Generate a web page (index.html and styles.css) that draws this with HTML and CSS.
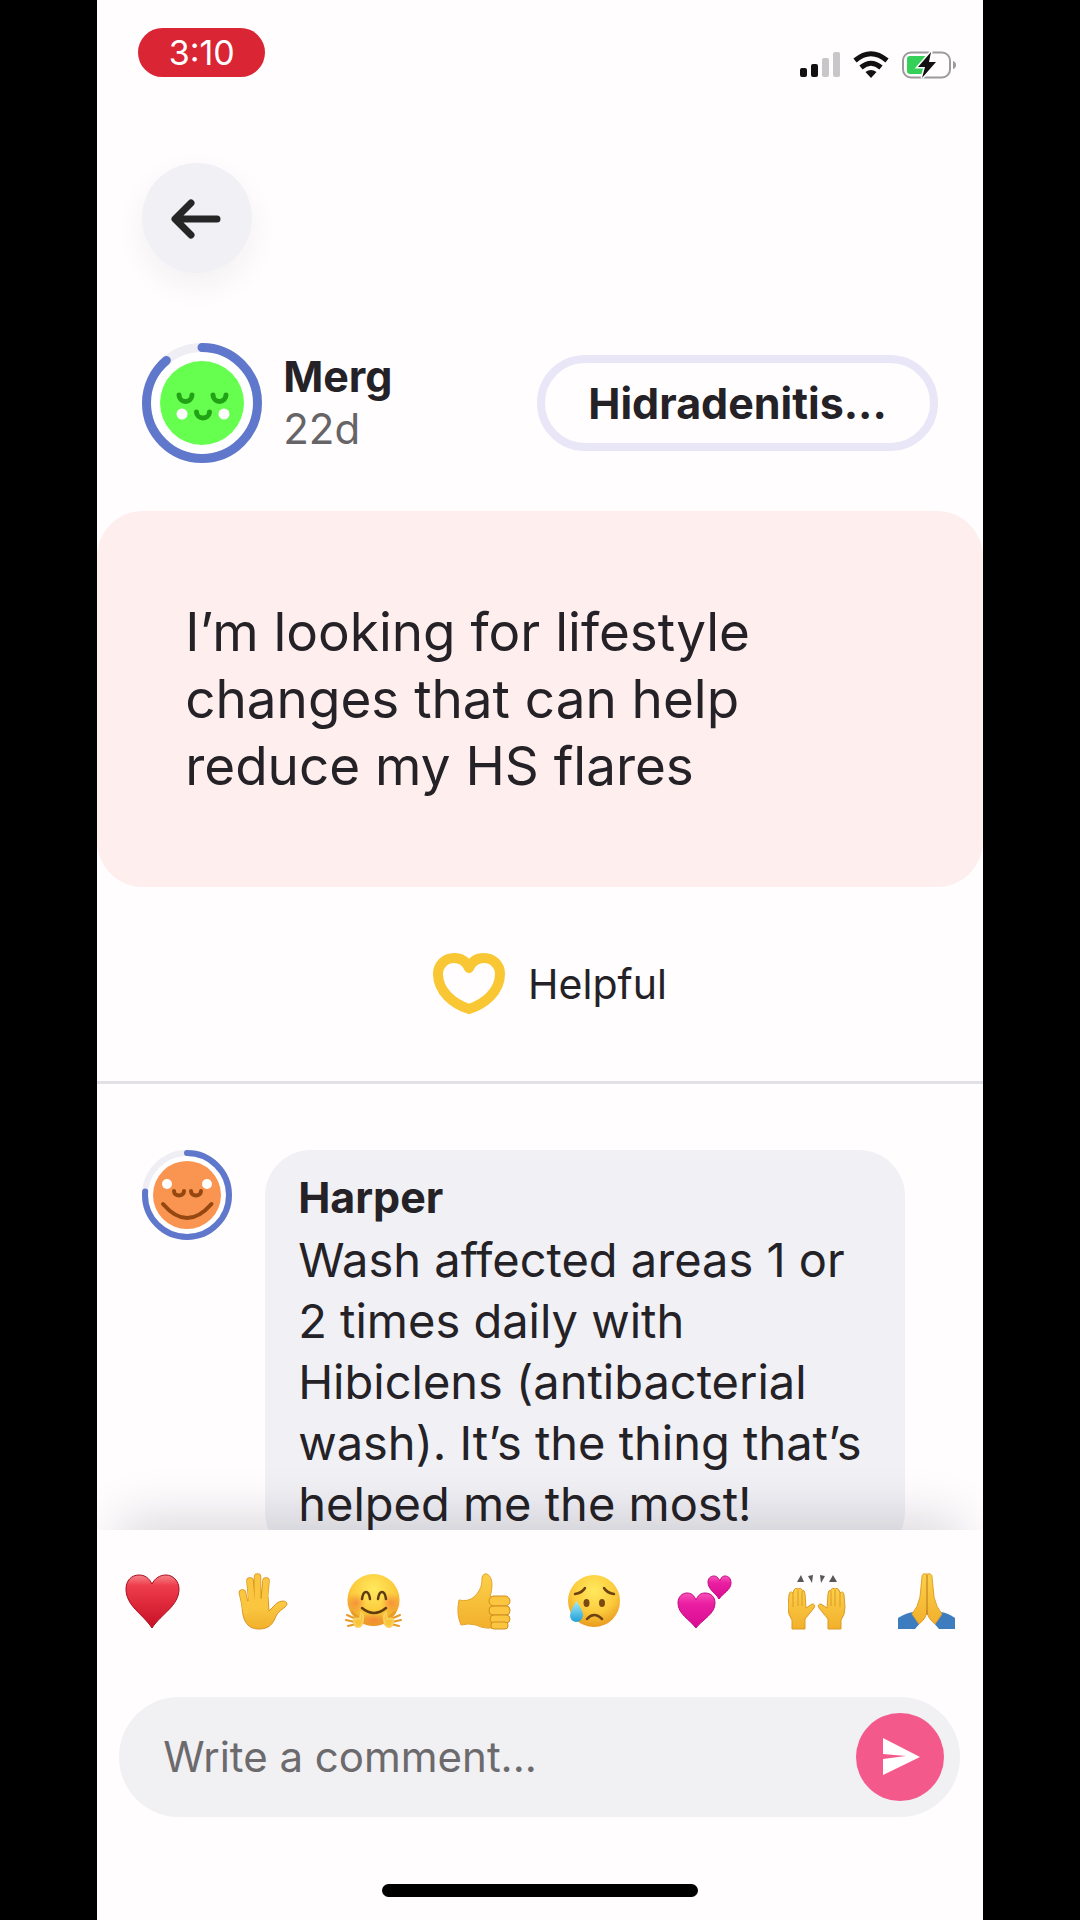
FILE: index.html
```html
<!DOCTYPE html>
<html lang="en">
<head>
    <meta charset="UTF-8">
    <meta name="viewport" content="width=device-width, initial-scale=1.0">
    <title>Post</title>
    <link rel="stylesheet" href="styles.css">
</head>
<body>
    <div class="phone">
        <main class="content">
            <!-- Status bar -->
            <div class="status-bar">
                <span class="time">3:10</span>
                <div class="status-icons">
                    <svg width="42" height="28" viewBox="0 0 42 28">
                        <rect x="1" y="17" width="7" height="9" rx="2" fill="#111"/>
                        <rect x="12" y="13" width="7" height="13" rx="2" fill="#111"/>
                        <rect x="23" y="7" width="7" height="19" rx="2" fill="#c8c6c9"/>
                        <rect x="34" y="1" width="7" height="25" rx="2" fill="#c8c6c9"/>
                    </svg>
                    <svg width="36" height="28" viewBox="0 0 36 28">
                        <g fill="none" stroke="#111" stroke-width="5">
                            <path d="M2 9.500Q18-4 34 9.500"/>
                            <path d="M8 16.500Q18 8 28 16.500"/>
                        </g>
                        <path d="M12.500 21Q18 17 23.500 21L18 27Z" fill="#111"/>
                    </svg>
                    <svg width="56" height="28" viewBox="0 0 56 28">
                        <rect x="2" y="1.500" width="47" height="25" rx="8" fill="none" stroke="#9c9a9d" stroke-width="2"/>
                        <path d="M52 10q3 1 3 4t-3 4z" fill="#9c9a9d"/>
                        <path d="M9 5h17v18H9q-3 0-3-3V8q0-3 3-3z" fill="#34d058"/>
                        <path d="M30 1L17 16h7l-3 11 14-16h-7z" fill="#111" stroke="#fff" stroke-width="3" paint-order="stroke"/>
                    </svg>
                </div>
            </div>

            <button class="back-btn" type="button" aria-label="Back">
                <svg width="110" height="110" viewBox="0 0 110 110">
                    <path d="M75 56H34M49 40L33 56l16 16" fill="none" stroke="#262626" stroke-width="7" stroke-linecap="round" stroke-linejoin="round"/>
                </svg>
            </button>

            <!-- Post -->
            <div class="post-header">
                <svg class="avatar" viewBox="0 0 120 120">
                    <circle cx="60" cy="60" r="55.500" fill="#fff" stroke="#efeef4" stroke-width="9"/>
                    <circle cx="60" cy="60" r="55.500" fill="none" stroke="#6078cb" stroke-width="9" stroke-linecap="round" pathLength="360" stroke-dasharray="320 360" transform="rotate(-90 60 60)"/>
                    <circle cx="60" cy="60" r="42" fill="#66ff4f"/>
                    <g fill="none" stroke="#22a315" stroke-width="5" stroke-linecap="round">
                        <path d="M37 52a6.500 6.500 0 0 0 13 0M71 52a6.500 6.500 0 0 0 13 0M54.500 69a6.500 6 0 0 0 13 0"/>
                    </g>
                    <circle cx="40" cy="71" r="5.500" fill="#fff"/>
                    <circle cx="82" cy="71" r="5.500" fill="#fff"/>
                </svg>
                <div class="author">
                    <div class="name">Merg</div>
                    <div class="age">22d</div>
                </div>
                <button class="topic-btn" type="button">Hidradenitis...</button>
            </div>

            <p class="post-text">I’m looking for lifestyle changes that can help reduce my HS flares</p>

            <button class="helpful-btn" type="button">
                <svg width="72" height="62" viewBox="0 0 72 62">
                    <path d="M36 15C33 8 27 5 21 5C12 5 5 12 5 21C5 38 20 51 36 56C52 51 67 38 67 21C67 12 60 5 51 5C45 5 39 8 36 15Z" fill="none" stroke="#f8c733" stroke-width="10" stroke-linejoin="round"/>
                </svg>
                Helpful
            </button>

            <!-- Comments -->
            <div class="comments">
                <svg class="avatar-small" viewBox="0 0 90 90">
                    <circle cx="45" cy="45" r="42" fill="#fff" stroke="#efeef4" stroke-width="6"/>
                    <circle cx="45" cy="45" r="42" fill="none" stroke="#6078cb" stroke-width="6" stroke-linecap="round" pathLength="360" stroke-dasharray="275 360" transform="rotate(-90 45 45)"/>
                    <circle cx="45" cy="45" r="34" fill="#f99550"/>
                    <g fill="none" stroke="#944710" stroke-width="4" stroke-linecap="round">
                        <path d="M32 41a5 4.500 0 0 0 10 0M49 41a5 4.500 0 0 0 10 0M21 54Q45 82 69.500 54"/>
                    </g>
                    <circle cx="25" cy="34" r="5" fill="#fff"/>
                    <circle cx="65" cy="34" r="5" fill="#fff"/>
                </svg>
                <div class="bubble">
                    <div class="name">Harper</div>
                    <p class="comment-text">Wash affected areas 1 or 2 times daily with Hibiclens (antibacterial wash). It’s the thing that’s helped me the most!</p>
                </div>
            </div>
        </main>

        <footer>
            <div class="reactions">
                <button type="button" aria-label="Heart">
                    <svg viewBox="0 0 58 58">
                        <defs>
                            <linearGradient id="red" x1="0" y1="0" x2="0" y2="1">
                                <stop offset="0" stop-color="#f5848a"/>
                                <stop offset=".2" stop-color="#ee3d4b"/>
                                <stop offset="1" stop-color="#c80f25"/>
                            </linearGradient>
                            <linearGradient id="skin" x1="0" y1="0" x2="0" y2="1">
                                <stop offset="0" stop-color="#fcd04a"/>
                                <stop offset="1" stop-color="#f2b02c"/>
                            </linearGradient>
                            <radialGradient id="face" cx=".5" cy=".3" r=".7">
                                <stop offset="0" stop-color="#ffe95e"/>
                                <stop offset=".6" stop-color="#fccb3c"/>
                                <stop offset="1" stop-color="#e99a20"/>
                            </radialGradient>
                            <radialGradient id="blush">
                                <stop offset="0" stop-color="#f47a3a" stop-opacity=".7"/>
                                <stop offset="1" stop-color="#f47a3a" stop-opacity="0"/>
                            </radialGradient>
                            <linearGradient id="pink" x1="0" y1="0" x2="0" y2="1">
                                <stop offset="0" stop-color="#f953b8"/>
                                <stop offset=".3" stop-color="#ea1fa2"/>
                                <stop offset="1" stop-color="#d80a92"/>
                            </linearGradient>
                            <linearGradient id="tear" x1="0" y1="0" x2="0" y2="1">
                                <stop offset="0" stop-color="#a5ecf8"/>
                                <stop offset="1" stop-color="#1f9fd8"/>
                            </linearGradient>
                        </defs>
                        <path d="M28 11C25 5 21 2 15 2C7 2 2 8 2 16C2 33 19 41 28 55C37 41 55 33 55 16C55 8 49 2 42 2C36 2 31 5 28 11Z" fill="url(#red)" stroke="#a90f20" stroke-width="1"/>
                    </svg>
                </button>
                <button type="button" aria-label="Raised hand">
                    <svg viewBox="0 0 58 58">
                        <g stroke="#d99420" stroke-width="7.500" stroke-linecap="round">
                            <path d="M8.500 20L12 36M16 8L18 30M23.500 4V28M32 8L30 30"/>
                        </g>
                        <path d="M8 30C8 46 12 56 25 56C35 56 39 51 42 43C45 37 52 35 53 31C53 27 45 27 41 32L35 38L34 24L12 28Z" fill="url(#skin)" stroke="#d99420" stroke-width="1"/>
                        <g stroke="#fac63f" stroke-width="6" stroke-linecap="round">
                            <path d="M8.500 20L12 38M16 8L18 34M23.500 4L23.600 34M32 8L30 34"/>
                        </g>
                    </svg>
                </button>
                <button type="button" aria-label="Hugging face">
                    <svg viewBox="0 0 58 58">
                        <circle cx="28.500" cy="27" r="26" fill="url(#face)"/>
                        <circle cx="11" cy="30" r="10" fill="url(#blush)"/>
                        <circle cx="46" cy="30" r="10" fill="url(#blush)"/>
                        <ellipse cx="28.500" cy="47" rx="15" ry="7" fill="url(#blush)"/>
                        <path d="M17 26q1-7 4-7t4 7M33 26q1-7 4-7t4 7M17 35Q29 45 41 35" fill="none" stroke="#5f3b12" stroke-width="2.500" stroke-linecap="round"/>
                        <g fill="#fbc33a" stroke="#f8d05a" stroke-width="2" stroke-linecap="round">
                            <path d="M2 42l9 4M1 47l9 2M3 53l8-2M7 39l7 6M55 42l-9 4M56 47l-9 2M54 53l-8-2M50 39l-7 6" stroke="#e69a28"/>
                            <path d="M9 46q5-1 6 0l1-6q3 1 2 7q-1 7-5 7t-4-8zM48 46q-5-1-6 0l-1-6q-3 1-2 7q1 7 5 7t4-8z"/>
                        </g>
                    </svg>
                </button>
                <button type="button" aria-label="Thumbs up">
                    <svg viewBox="0 0 58 58">
                        <path d="M3 27Q12 29 18 24C25 17 26 12 26 5Q27 0 31 1C37 4 37 14 34 24H40V54Q30 57 20 52Q12 50 5 52Q0 41 3 27Z" fill="url(#skin)" stroke="#e5a52c" stroke-width="1"/>
                        <g fill="#fbc53f" stroke="#d18d1e" stroke-width="1">
                            <rect x="33" y="23" width="21" height="10" rx="5"/>
                            <rect x="33" y="33" width="21" height="9" rx="4"/>
                            <rect x="34" y="42" width="20" height="8" rx="4"/>
                            <rect x="35" y="49" width="17" height="7" rx="3"/>
                        </g>
                    </svg>
                </button>
                <button type="button" aria-label="Sad but relieved face">
                    <svg viewBox="0 0 58 58">
                        <circle cx="28" cy="28" r="26" fill="url(#face)"/>
                        <path d="M9 21q7-1 10-6M48 21q-7-1-10-6M21 46q7-8 15 0" fill="none" stroke="#6b4213" stroke-width="2.500" stroke-linecap="round"/>
                        <ellipse cx="20.500" cy="30" rx="3" ry="4" fill="#7a4a12"/>
                        <ellipse cx="36" cy="30" rx="3" ry="4" fill="#7a4a12"/>
                        <path d="M10.500 28Q17 38 17 42Q16 49 10 49Q4 48 4 42Q5 36 10.500 28Z" fill="url(#tear)"/>
                    </svg>
                </button>
                <button type="button" aria-label="Two hearts">
                    <svg viewBox="0 0 58 58">
                        <path d="M19 27C17 22 14 20 10 20C5 20 1 24 1 30C1 41 12 46 19 55C26 46 38 41 38 30C38 24 34 20 28 20C24 20 21 22 19 27Z" fill="url(#pink)" stroke="#c20a84" stroke-width="1"/>
                        <path d="M43 8C41 4 39 3 37 3C33 3 31 6 31 9C31 17 39 20 42 26C46 20 54 17 54 10C54 6 52 3 48 3C46 3 44 4 43 8Z" fill="url(#pink)" stroke="#c20a84" stroke-width="1"/>
                    </svg>
                </button>
                <button type="button" aria-label="Raising hands">
                    <svg viewBox="0 0 58 58">
                        <path d="M9 9l4-7 3 7zM20 3l5-1-1 8zM32 2l5 1-4 7zM41 9l4-7 4 7z" fill="#5a5759"/>
                        <g id="raised">
                            <path d="M4 56V47Q0 42 0 34L1 22Q2 17 5 20L6 17Q8 14 10 16Q13 14 14 17Q17 17 17 21L18 35L24 31Q28 31 26 35L17 46V56Z" fill="url(#skin)" stroke="#dc9a25" stroke-width="1"/>
                            <path d="M5 20v14M10 17v16M14 18v15" stroke="#dc9a25"/>
                        </g>
                        <use href="#raised" transform="matrix(-1 0 0 1 57 0)"/>
                    </svg>
                </button>
                <button type="button" aria-label="Folded hands">
                    <svg viewBox="0 0 58 58">
                        <path d="M0 45Q8 40 15 39L23 49L17 56H0Z" fill="#3e7cc0"/>
                        <path d="M57 45Q50 40 43 39L35 49L41 56H57Z" fill="#3e7cc0"/>
                        <path d="M28 1Q24 0 24 4L22 24Q20 34 14 41L21 51Q29 45 29 37Q29 45 37 51L44 41Q38 34 36 24L34 4Q34 0 29 1Z" fill="url(#skin)" stroke="#e0a02a" stroke-width="1"/>
                        <path d="M29 2V42" stroke="#b77418" stroke-width="1"/>
                    </svg>
                </button>
            </div>

            <form class="comment-form">
                <input type="text" placeholder="Write a comment..." aria-label="Write a comment">
                <button class="send-btn" type="button" aria-label="Send">
                    <svg width="88" height="88" viewBox="0 0 88 88">
                        <path d="M27 25L64 44L27 62V46L50 43L27 41Z" fill="#fff"/>
                    </svg>
                </button>
            </form>
            <div class="home-bar"></div>
        </footer>
    </div>
</body>
</html>
```
FILE: styles.css
```css
body {
    font-family: Inter, "Noto Sans", sans-serif;
    background-color: #000;
    color: #242226;
    margin: 0;
    padding: 0 9%;
    height: 100vh;
    overflow: hidden;
}

button, input {
    font-family: inherit;
    color: inherit;
    border: none;
    background: none;
    padding: 0;
}

button {
    cursor: pointer;
}

svg {
    display: block;
    flex-shrink: 0;
}

p {
    margin: 0;
}

.phone {
    display: flex;
    flex-direction: column;
    height: 100%;
    background-color: #fffdfe;
    overflow: hidden;
}

.content {
    flex: 1;
    min-height: 0;
    overflow: hidden;
}

/* Status bar */
.status-bar {
    display: flex;
    justify-content: space-between;
    align-items: flex-start;
    padding: 28px 26px 0 41px;
}

.time {
    width: 127px;
    border-radius: 25px;
    background-color: #d92534;
    color: #fff;
    font-size: 34px;
    line-height: 49px;
    text-align: center;
}

.status-icons {
    display: flex;
    gap: 12px;
    margin-top: 23px;
}

.back-btn {
    display: block;
    margin: 84px 0 0 45px;
    border-radius: 50%;
    background-color: #f0f0f5;
    box-shadow: 0 12px 32px rgba(60, 30, 60, 0.06);
}

/* Post */
.post-header {
    display: flex;
    align-items: center;
    margin: 70px 45px 48px;
}

.avatar {
    width: 120px;
    height: 120px;
}

.author {
    flex: 1;
    margin-left: 21px;
}

.name {
    font-size: 43px;
    font-weight: 700;
    line-height: 52px;
}

.age {
    color: #666467;
    font-size: 42px;
    line-height: 54px;
}

.topic-btn {
    padding: 0 43px;
    border: 8px solid #e9e7f7;
    border-radius: 48px;
    font-size: 43px;
    font-weight: 700;
    line-height: 80px;
}

.post-text {
    padding: 88px 190px 87px 88px;
    border-radius: 46px;
    background-color: #feeeee;
    font-size: 53px;
    line-height: 67px;
}

.helpful-btn {
    display: flex;
    justify-content: center;
    align-items: center;
    gap: 23px;
    width: 100%;
    height: 197px;
    padding-left: 20px;
    border-bottom: 3px solid #e2e1e7;
    font-size: 41px;
}

/* Comments */
.comments {
    display: flex;
    align-items: flex-start;
    gap: 33px;
    padding: 66px 78px 0 45px;
}

.avatar-small {
    width: 90px;
    height: 90px;
}

.bubble {
    flex: 1;
    padding: 21px 26px 24px 33px;
    border-radius: 46px;
    background-color: #f0f0f5;
}

.comment-text {
    margin-top: 6px;
    font-size: 47px;
    line-height: 61px;
}

/* Bottom panel, its shadow falls on the comments */
footer {
    position: relative;
    padding: 43px 0 23px;
    background-color: #fffdfe;
    box-shadow: 0 -34px 50px -24px rgba(20, 10, 30, 0.16);
}

.reactions {
    display: grid;
    grid-template-columns: repeat(8, 1fr);
    justify-items: center;
}

.reactions svg {
    width: 58px;
    height: 58px;
}

.comment-form {
    display: flex;
    align-items: center;
    margin: 66px 23px 67px 22px;
    padding: 16px;
    border-radius: 61px;
    background-color: #f1f0f3;
}

.comment-form input {
    flex: 1;
    min-width: 0;
    padding-left: 28px;
    font-size: 42px;
    line-height: 60px;
    outline: none;
}

.comment-form input::placeholder {
    color: #6c6a6d;
    opacity: 1;
}

.send-btn {
    border-radius: 50%;
    background-color: #f4598c;
}

.home-bar {
    width: 316px;
    height: 13px;
    margin: 0 auto;
    border-radius: 7px;
    background-color: #000;
}
```
